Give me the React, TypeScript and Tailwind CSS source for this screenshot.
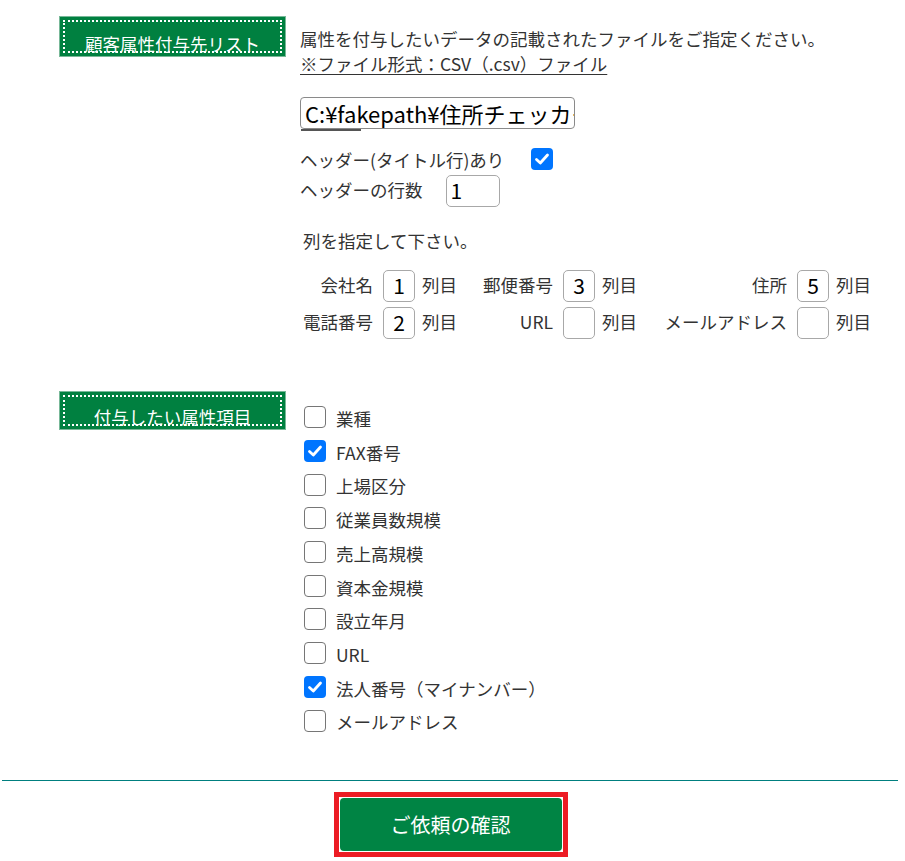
import React from "react";

const Check = ({ checked }: { checked?: boolean }) =>
  checked ? (
    <div className="w-[22px] h-[22px] rounded-[4px] bg-[#0075ff] flex items-center justify-center shrink-0">
      <svg width="16" height="16" viewBox="0 0 16 16">
        <path d="M2.5 8.5 L6.3 12 L13.5 4" fill="none" stroke="#fff" strokeWidth="2.8" strokeLinecap="round" strokeLinejoin="round" />
      </svg>
    </div>
  ) : (
    <div className="w-[22px] h-[22px] rounded-[4px] border-[1.5px] border-[#767676] bg-white shrink-0" />
  );

const SectionLabel = ({ text, h }: { text: string; h: string }) => (
  <div className={`w-[227px] ${h} bg-[#008040] border border-[#78b898] p-[3px] shrink-0`}>
    <div className="h-full border-2 border-dotted border-white flex items-end justify-center">
      <span className="text-white text-[17.5px] leading-[18px] -mb-[2px]">{text}</span>
    </div>
  </div>
);

const ColCell = ({ label, value, lw }: { label: string; value: string; lw: string }) => (
  <div className="flex items-center">
    <span className={`${lw} text-right whitespace-nowrap`}>{label}</span>
    <div className="ml-[10px] w-[32px] h-[32px] border border-[#a8a8a8] rounded-[5px] flex items-center justify-center text-[21px] text-black leading-none">
      {value}
    </div>
    <span className="ml-[7px] w-[35px] whitespace-nowrap">列目</span>
  </div>
);

const items: [string, boolean][] = [
  ["業種", false],
  ["FAX番号", true],
  ["上場区分", false],
  ["従業員数規模", false],
  ["売上高規模", false],
  ["資本金規模", false],
  ["設立年月", false],
  ["URL", false],
  ["法人番号（マイナンバー）", true],
  ["メールアドレス", false],
];

export default function App() {
  return (
    <div className="w-[905px] h-[861px] bg-white text-[#333] text-[17.5px] font-['Noto_Sans_CJK_JP','Noto_Sans',sans-serif] overflow-hidden">
      {/* Section 1 */}
      <div className="flex pt-[16px] pl-[59px]">
        <SectionLabel text="顧客属性付与先リスト" h="h-[41px]" />
        <div className="ml-[14px] mt-[10px] flex flex-col">
          <div className="leading-[25px] whitespace-nowrap">属性を付与したいデータの記載されたファイルをご指定ください。</div>
          <div className="leading-[25px] underline underline-offset-[3px] whitespace-nowrap">※ファイル形式：CSV（.csv）ファイル</div>
          <div className="mt-[21px] flex flex-col">
            <div className="w-[275px] h-[32px] border border-[#8a8a8a] rounded-[4px] overflow-hidden flex items-center pl-[4px] text-[22px] text-black whitespace-nowrap leading-none">
              C:¥fakepath¥住所チェッカー.csv
            </div>
            <div className="ml-[1px] w-[60px] h-[1.5px] bg-[#555]" />
          </div>
          <div className="mt-[18px] flex items-center h-[21px]">
            <span className="leading-[21px] whitespace-nowrap">ヘッダー(タイトル行)あり</span>
            <div className="ml-[27px]">
              <Check checked />
            </div>
          </div>
          <div className="mt-[5px] flex items-center">
            <span className="whitespace-nowrap">ヘッダーの行数</span>
            <div className="ml-[23px] w-[54px] h-[32px] border border-[#a8a8a8] rounded-[5px] flex items-center pl-[4px] text-[21px] text-black leading-none">
              1
            </div>
          </div>
          <div className="mt-[21px] ml-[3px] leading-[25px]">列を指定して下さい。</div>
          <div className="mt-[17px] flex flex-col gap-[5px]">
            <div className="flex">
              <ColCell label="会社名" value="1" lw="w-[73px]" />
              <ColCell label="郵便番号" value="3" lw="w-[96px]" />
              <ColCell label="住所" value="5" lw="w-[150px]" />
            </div>
            <div className="flex">
              <ColCell label="電話番号" value="2" lw="w-[73px]" />
              <ColCell label="URL" value="" lw="w-[96px]" />
              <ColCell label="メールアドレス" value="" lw="w-[150px]" />
            </div>
          </div>
        </div>
      </div>

      {/* Section 2 */}
      <div className="flex mt-[52px] pl-[59px]">
        <SectionLabel text="付与したい属性項目" h="h-[39px]" />
        <div className="ml-[18px] mt-[10px] flex flex-col">
          {items.map(([t, c]) => (
            <div key={t} className="h-[33.7px] flex items-center">
              <Check checked={c} />
              <span className="ml-[10px] whitespace-nowrap leading-none mt-[3px]">{t}</span>
            </div>
          ))}
        </div>
      </div>

      <div className="mt-[43px] ml-[2px] mr-[7px] h-[1px] bg-[#007f7f]" />

      <div className="mt-[11px] flex justify-center pr-[4px]">
        <div className="border-[5px] border-[#ec1c24] p-[1px] bg-white">
          <div className="w-[222px] h-[53px] bg-[#008444] rounded-[4px] flex items-center justify-center text-white text-[20px]">
            ご依頼の確認
          </div>
        </div>
      </div>
    </div>
  );
}
